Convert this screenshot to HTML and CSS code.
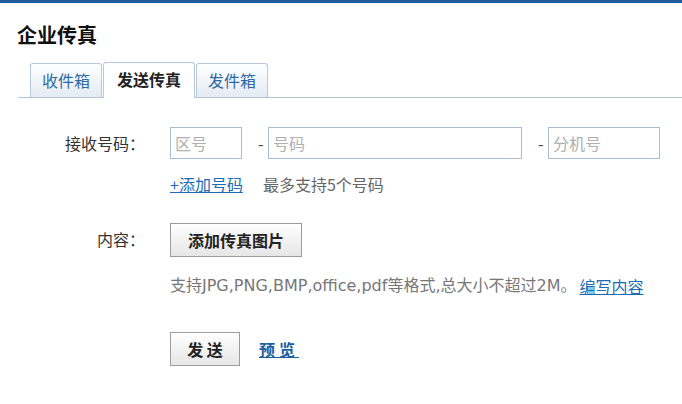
FILE: index.html
```html
<!DOCTYPE html>
<html lang="zh-CN">
<head>
<meta charset="utf-8">
<title>企业传真</title>
<link rel="stylesheet" href="styles.css">
</head>
<body>
<div class="topbar"></div>
<h1 class="title">企业传真</h1>
<div class="tabs">
  <a class="tab">收件箱</a>
  <a class="tab active">发送传真</a>
  <a class="tab">发件箱</a>
</div>
<form class="form">
  <div class="row row-number">
    <label class="label">接收号码：</label>
    <div class="field">
      <input class="inp inp-area" type="text" placeholder="区号">
      <span class="dash">-</span>
      <input class="inp inp-num" type="text" placeholder="号码">
      <span class="dash">-</span>
      <input class="inp inp-ext" type="text" placeholder="分机号">
    </div>
  </div>
  <div class="row row-add">
    <span class="label"></span>
    <div class="field">
      <a class="link" href="#">+添加号码</a>
      <span class="tip">最多支持5个号码</span>
    </div>
  </div>
  <div class="row row-content">
    <label class="label label-top">内容：</label>
    <div class="field">
      <button class="btn btn-upload" type="button">添加传真图片</button>
    </div>
  </div>
  <div class="row row-hint">
    <span class="label"></span>
    <div class="field">
      <span class="hint">支持JPG,PNG,BMP,office,pdf等格式,总大小不超过2M。</span><a class="link link-edit" href="#">编写内容</a>
    </div>
  </div>
  <div class="row row-send">
    <span class="label"></span>
    <div class="field">
      <button class="btn btn-send" type="button">发 送</button>
      <a class="link link-preview" href="#">预览</a>
    </div>
  </div>
</form>
</body>
</html>
```

FILE: styles.css
```css
html, body {
  margin: 0;
  padding: 0;
  background: #ffffff;
}
body {
  font-family: "Noto Sans CJK SC", "Noto Sans", sans-serif;
  font-size: 16px;
  color: #333333;
}
.topbar {
  height: 3px;
  background: #1f5c9f;
}
.title {
  margin: 0;
  padding: 19px 0 0 17px;
  font-size: 20px;
  line-height: 26px;
  font-weight: bold;
  color: #111111;
}
.tabs {
  display: flex;
  gap: 1px;
  margin: 14px 0 0 18px;
  padding-left: 12px;
  border-bottom: 1px solid #b3c4d6;
  height: 35px;
  align-items: flex-end;
}
.tab {
  display: block;
  box-sizing: border-box;
  width: 72px;
  height: 34px;
  padding: 0;
  text-align: center;
  line-height: 32px;
  border: 1px solid #b8c8d9;
  border-bottom: none;
  border-radius: 3px 3px 0 0;
  background: linear-gradient(#ffffff, #e4ebf3);
  color: #2f68a6;
  font-size: 16px;
}
.tab.active {
  width: 92px;
  height: 36px;
  margin-bottom: -1px;
  line-height: 33px;
  background: #ffffff;
  color: #222222;
  font-weight: bold;
}
.form {
  margin: 0;
  padding-top: 29px;
}
.row {
  display: flex;
  align-items: center;
}
.label {
  width: 145px;
  flex: none;
  text-align: right;
  margin-right: 25px;
  color: #333333;
}
.label-top {
  align-self: flex-start;
  padding-top: 4px;
}
.field {
  display: flex;
  align-items: center;
}
.inp {
  box-sizing: border-box;
  height: 32px;
  margin: 0;
  padding: 0 0 0 4px;
  border: 1px solid #a8bcd3;
  font-family: inherit;
  font-size: 16px;
  color: #333333;
  outline: none;
}
.inp::placeholder {
  color: #b0b0b0;
}
.inp-area { width: 72px; }
.inp-num { width: 254px; }
.inp-ext { width: 112px; }
.dash {
  width: 26px;
  padding-left: 16px;
  box-sizing: border-box;
  color: #444444;
  font-size: 16px;
}
.row-add {
  margin-top: 14px;
  line-height: 22px;
}
.link {
  color: #1d6bb3;
  text-decoration: underline;
}
.tip {
  margin-left: 20px;
  color: #666666;
}
.row-content {
  margin-top: 28px;
}
.btn {
  box-sizing: border-box;
  margin: 0;
  border: 1px solid #9c9c9c;
  background: linear-gradient(#ffffff, #e6e6e6);
  font-family: inherit;
  font-size: 16px;
  font-weight: bold;
  color: #222222;
  cursor: pointer;
}
.btn-upload {
  width: 132px;
  height: 34px;
  padding: 0;
}
.row-hint {
  margin-top: 17px;
  line-height: 24px;
}
.hint {
  font-family: "DejaVu Sans", "Noto Sans CJK SC", sans-serif;
  font-size: 16px;
  color: #777777;
}
.link-edit {
  margin-left: 3px;
}
.row-send {
  margin-top: 34px;
}
.btn-send {
  width: 70px;
  height: 34px;
  padding: 0;
}
.link-preview {
  margin-left: 19px;
  font-weight: bold;
  letter-spacing: 4px;
  color: #1a5f9f;
}
```
